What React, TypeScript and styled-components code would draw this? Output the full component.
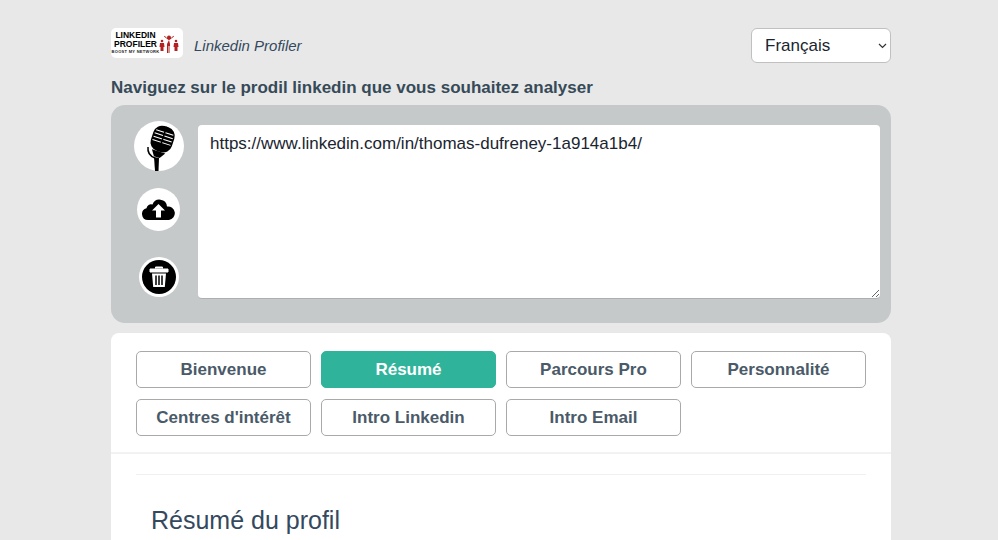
import * as React from 'react';
import styled, { createGlobalStyle } from 'styled-components';

const GlobalStyle = createGlobalStyle`
  html, body {
    margin: 0;
    height: 540px;
    overflow: hidden;
    background: #e8e8e8;
    font-family: "Liberation Sans", Arial, sans-serif;
  }
  * { box-sizing: border-box; }
`;

const Page = styled.div`
  width: 780px;
  height: 540px;
  overflow: hidden;
  margin-left: 111px;
  padding-top: 28px;
`;

const Header = styled.header`
  display: flex;
  justify-content: space-between;
  align-items: flex-start;
  height: 35px;
`;

const Brand = styled.div`
  display: flex;
  align-items: flex-start;
  gap: 11px;
`;

const Logo = styled.div`
  width: 72px;
  height: 30px;
  background: #fff;
  border-radius: 5px;
  padding: 3px 0 0 4px;
  display: flex;
  gap: 3px;
`;

const LogoWords = styled.div`
  display: flex;
  flex-direction: column;
  align-items: center;
  width: 41px;
`;

const LogoLine = styled.span`
  font-size: 8.500px;
  line-height: 9px;
  font-weight: 700;
  color: #000;
  white-space: nowrap;
`;

const LogoTag = styled.span`
  font-size: 4px;
  line-height: 6px;
  font-weight: 700;
  letter-spacing: 0.3px;
  color: #222;
  white-space: nowrap;
`;

const BrandName = styled.span`
  margin-top: 9px;
  font-size: 15px;
  line-height: 18px;
  font-style: italic;
  color: #34495e;
`;

const SelectWrap = styled.div`
  position: relative;
  width: 140px;
  height: 35px;
`;

const LangSelect = styled.select`
  appearance: none;
  width: 100%;
  height: 100%;
  padding: 0 13px;
  font-family: inherit;
  font-size: 17px;
  color: #1a2530;
  background: #fff;
  border: 1px solid #c0c0c0;
  border-radius: 6px;
`;

const Chevron = styled.svg`
  position: absolute;
  right: 4px;
  top: 15px;
  pointer-events: none;
`;

const Heading = styled.h2`
  margin: 15px 0 8px;
  font-size: 17px;
  line-height: 19px;
  font-weight: 700;
  color: #364a58;
`;

const InputPanel = styled.section`
  display: flex;
  gap: 14px;
  height: 218px;
  padding: 16px 11px 24px 22px;
  background: #c5c9ca;
  border-radius: 14px;
`;

const IconColumn = styled.div`
  width: 51px;
  display: flex;
  flex-direction: column;
  align-items: center;
`;

const RoundIcon = styled.button<{ $size: number; $top: number }>`
  width: ${({ $size }) => $size}px;
  height: ${({ $size }) => $size}px;
  margin-top: ${({ $top }) => $top}px;
  padding: 0;
  flex: none;
  border: 0;
  border-radius: 50%;
  background: #fff;
  display: flex;
  align-items: center;
  justify-content: center;
`;

const UrlField = styled.textarea`
  flex: 1;
  height: 174px;
  margin-top: 4px;
  padding: 9px 12px;
  font-family: inherit;
  font-size: 17px;
  line-height: 20px;
  color: #1a2530;
  background: #fff;
  border: 0;
  border-bottom: 1px solid #aab0b3;
  border-radius: 4px;
  outline: none;
`;

const Card = styled.section`
  margin-top: 10px;
  height: 300px;
  background: #fff;
  border-radius: 8px 8px 0 0;
`;

const Tabs = styled.nav`
  display: grid;
  grid-template-columns: repeat(4, 175px);
  column-gap: 10px;
  row-gap: 11px;
  padding: 18px 25px 16px;
  border-bottom: 2px solid #f2f2f2;
`;

const Tab = styled.button<{ $active?: boolean }>`
  height: 37px;
  padding: 0;
  font-family: inherit;
  font-size: 17px;
  font-weight: 700;
  color: ${({ $active }) => ($active ? '#fff' : '#4a5a68')};
  background: ${({ $active }) => ($active ? '#2fb39b' : '#fff')};
  border: 1px solid ${({ $active }) => ($active ? '#2fb39b' : '#a9a9a9')};
  border-radius: 5px;
`;

const Content = styled.div`
  margin: 20px 25px 0;
  border-top: 1px solid #f0f0f0;
  padding: 31px 15px 0;
`;

const Title = styled.h3`
  margin: 0;
  font-size: 25px;
  line-height: 28px;
  font-weight: 400;
  color: #34495e;
`;

const Mic = () => (
  <svg width="50" height="50" viewBox="0 0 50 50">
    <g transform="rotate(18 28 20)">
      <rect x="17" y="5" width="22" height="26" rx="9" fill="#000" />
      <path d="M19 11h18M18.500 14.500h19M18.500 18h19M18.500 21.500h19" stroke="#fff" strokeWidth="1" />
      <path d="M28 5v26" stroke="#000" strokeWidth="1.500" />
      <path d="M21 31h14l-4 6h-6z" fill="#000" />
    </g>
    <path d="M14 26q-1 8 7 11" fill="none" stroke="#000" strokeWidth="1.500" />
    <path d="M20 36l5 1-.500 13h-3.500z" fill="#000" />
  </svg>
);

const CloudUpload = () => (
  <svg width="33" height="21" viewBox="0 0 33 21">
    <path
      d="M6 21a6 6 0 0 1-1.500-11.800A4.500 4.500 0 0 1 10.500 5.500 7.500 7.500 0 0 1 25 7.500 6.800 6.800 0 0 1 27 21z"
      fill="#000"
    />
    <path d="M16.500 5l6.500 6.500h-4v7h-5v-7h-4z" fill="#fff" />
  </svg>
);

const Trash = () => (
  <svg width="34" height="34" viewBox="0 0 34 34">
    <circle cx="17" cy="17" r="17" fill="#000" />
    <path d="M13.500 8.500V7h7v1.500M8 9h18v3H8z" fill="#fff" stroke="#fff" strokeWidth="1" />
    <path d="M10 13.500h14l-1.200 13.500H11.200z" fill="#fff" />
    <path d="M14 15.500v9.500M17 15.500v9.500M20 15.500v9.500" stroke="#000" strokeWidth="1.500" />
  </svg>
);

const LogoPeople = () => (
  <svg width="20" height="24" viewBox="0 0 20 24" fill="#b3201f">
    <circle cx="10" cy="6.500" r="2" />
    <path d="M10 9l-1-.500-4-3 .6-.8L8 7h4l2.400-2.300.6.8-4 3-1 .5 1 4v9H10.500v-7h-1v7H8v-9z" />
    <circle cx="3" cy="10" r="1.300" />
    <path d="M1 12h4l.5 4H4.500v4h-3v-4H.5z" />
    <circle cx="17" cy="10" r="1.300" />
    <path d="M15 12h4l.5 4h-1v4h-3v-4h-1z" />
  </svg>
);

const tabs = ['Bienvenue', 'Résumé', 'Parcours Pro', 'Personnalité', "Centres d'intérêt", 'Intro Linkedin', 'Intro Email'];

const App = () => {
  return (
    <Page>
      <GlobalStyle />
      <Header>
        <Brand>
          <Logo>
            <LogoWords>
              <LogoLine>LINKEDIN</LogoLine>
              <LogoLine>PROFILER</LogoLine>
              <LogoTag>BOOST MY NETWORK</LogoTag>
            </LogoWords>
            <LogoPeople />
          </Logo>
          <BrandName>Linkedin Profiler</BrandName>
        </Brand>
        <SelectWrap>
          <LangSelect defaultValue="fr">
            <option value="fr">Français</option>
            <option value="en">English</option>
          </LangSelect>
          <Chevron width="9" height="6" viewBox="0 0 9 6">
            <path d="M1 1l3.500 3.500L8 1" fill="none" stroke="#333" strokeWidth="1.200" />
          </Chevron>
        </SelectWrap>
      </Header>
      <Heading>Naviguez sur le prodil linkedin que vous souhaitez analyser</Heading>
      <InputPanel>
        <IconColumn>
          <RoundIcon $size={50} $top={0}>
            <Mic />
          </RoundIcon>
          <RoundIcon $size={43} $top={17}>
            <CloudUpload />
          </RoundIcon>
          <RoundIcon $size={40} $top={26}>
            <Trash />
          </RoundIcon>
        </IconColumn>
        <UrlField defaultValue="https://www.linkedin.com/in/thomas-dufreney-1a914a1b4/" />
      </InputPanel>
      <Card>
        <Tabs>
          {tabs.map((label) => (
            <Tab key={label} $active={label === 'Résumé'}>
              {label}
            </Tab>
          ))}
        </Tabs>
        <Content>
          <Title>Résumé du profil</Title>
        </Content>
      </Card>
    </Page>
  );
};

export default App;
